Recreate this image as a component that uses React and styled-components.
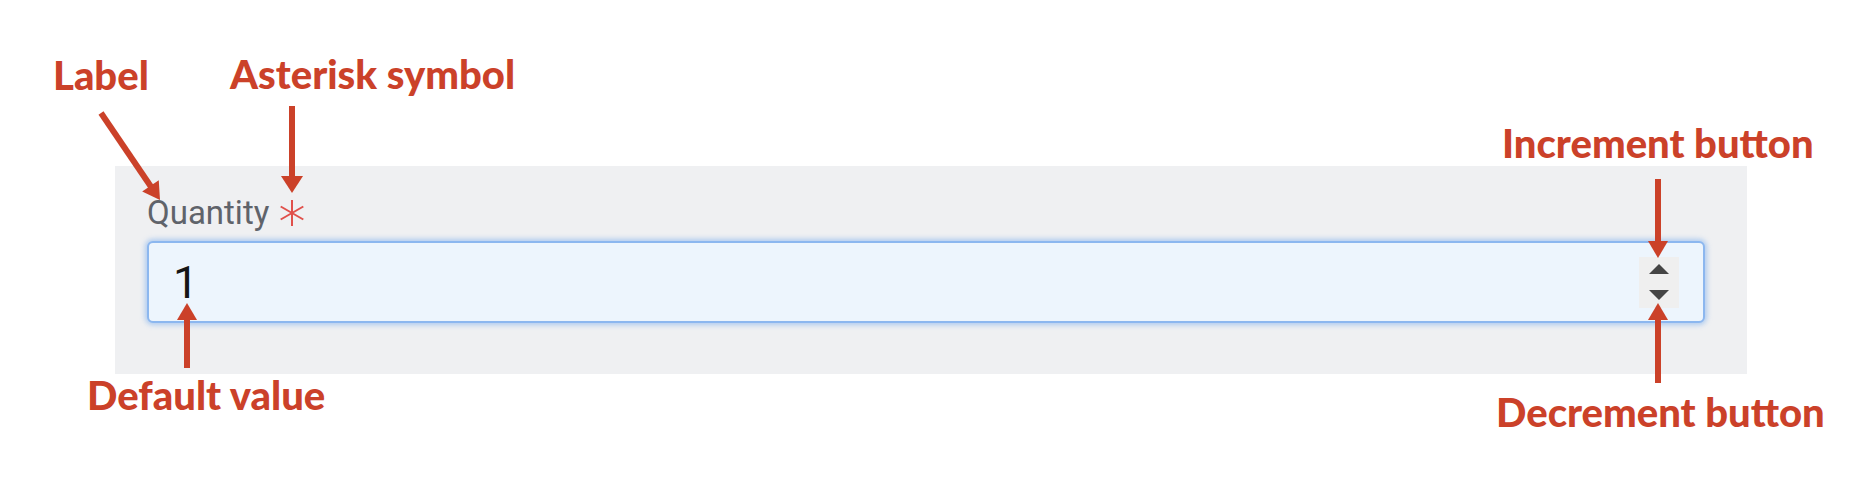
import React from 'react';
import styled, { createGlobalStyle } from 'styled-components';

const colors = {
  annotation: '#cb4129',
  panel: '#eff0f2',
  field: '#edf5fd',
  focus: '#8cb7ef',
  label: '#5f636a',
  required: '#e0504b',
  spin: '#efefef',
  spinGlyph: '#454545',
  value: '#151515',
};

const GlobalStyle = createGlobalStyle`
  html, body {
    margin: 0;
    padding: 0;
    background: #ffffff;
  }
  body {
    font-family: Roboto, "Noto Sans", sans-serif;
  }
`;

const Canvas = styled.div`
  position: relative;
  width: 1872px;
  height: 504px;
  box-sizing: border-box;
  padding: 166px 0 0 115px;
  overflow: hidden;
`;

const Panel = styled.div`
  display: flex;
  flex-direction: column;
  gap: 8px;
  width: 1632px;
  height: 208px;
  box-sizing: border-box;
  padding: 27px 42px 0 32px;
  background: ${colors.panel};
`;

const Label = styled.label`
  display: flex;
  align-items: center;
  gap: 10px;
  font-size: 33px;
  line-height: 40px;
  color: ${colors.label};
`;

const Field = styled.div`
  display: flex;
  align-items: center;
  justify-content: space-between;
  height: 82px;
  box-sizing: border-box;
  padding: 0 24px 0 24px;
  border: 2px solid ${colors.focus};
  border-radius: 6px;
  background: ${colors.field};
  box-shadow: 0 0 5px 2px rgba(132, 178, 238, 0.6);
`;

const Value = styled.span`
  font-size: 45px;
  line-height: 1;
  color: ${colors.value};
`;

const Spinner = styled.div`
  display: flex;
  flex-direction: column;
  width: 40px;
  height: 51px;
  background: ${colors.spin};
`;

const SpinButton = styled.button`
  flex: 1;
  display: flex;
  align-items: center;
  justify-content: center;
  padding: 0;
  border: none;
  background: transparent;
  cursor: pointer;

  &::before {
    content: '';
    width: 0;
    height: 0;
    border-left: 10px solid transparent;
    border-right: 10px solid transparent;
    ${(p) => (p.$down
      ? `border-top: 10px solid ${colors.spinGlyph};`
      : `border-bottom: 10px solid ${colors.spinGlyph};`)}
  }
`;

const Overlay = styled.svg`
  position: absolute;
  left: 0;
  top: 0;
  pointer-events: none;
`;

const Callout = styled.span`
  position: absolute;
  left: ${(p) => p.$x}px;
  top: ${(p) => p.$y}px;
  font-family: Lato, "Open Sans", sans-serif;
  font-weight: 900;
  font-size: 40px;
  line-height: 1;
  white-space: nowrap;
  color: ${colors.annotation};
`;

function RequiredMark() {
  return (
    <svg width="26" height="26" viewBox="0 0 26 26" aria-label="required">
      <g stroke={colors.required} strokeWidth="2" strokeLinecap="butt">
        <line x1="13" y1="0" x2="13" y2="26" />
        <line x1="1.7" y1="6.5" x2="24.3" y2="19.5" />
        <line x1="1.7" y1="19.5" x2="24.3" y2="6.5" />
      </g>
    </svg>
  );
}

function Arrow({ from, to, head = 17, width = 20 }) {
  const dx = to[0] - from[0];
  const dy = to[1] - from[1];
  const len = Math.hypot(dx, dy);
  const ux = dx / len;
  const uy = dy / len;
  const bx = to[0] - ux * head;
  const by = to[1] - uy * head;
  const nx = -uy * (width / 2);
  const ny = ux * (width / 2);
  return (
    <g fill={colors.annotation} stroke="none">
      <line x1={from[0]} y1={from[1]} x2={bx + ux} y2={by + uy} stroke={colors.annotation} strokeWidth="6" />
      <polygon points={`${to[0]},${to[1]} ${bx + nx},${by + ny} ${bx - nx},${by - ny}`} />
    </g>
  );
}

const arrows = [
  { from: [101, 113], to: [160, 200] },
  { from: [292, 106], to: [292, 193], width: 22 },
  { from: [187, 368], to: [187, 303] },
  { from: [1658, 179], to: [1658, 258] },
  { from: [1658, 383], to: [1658, 303] },
];

const callouts = [
  { text: 'Label', x: 53, y: 55 },
  { text: 'Asterisk symbol', x: 230, y: 54 },
  { text: 'Increment button', x: 1502, y: 123 },
  { text: 'Default value', x: 87, y: 375 },
  { text: 'Decrement button', x: 1496, y: 392 },
];

export default function App() {
  return (
    <>
      <GlobalStyle />
      <Canvas>
        <Panel>
          <Label>
            Quantity
            <RequiredMark />
          </Label>
          <Field>
            <Value>1</Value>
            <Spinner>
              <SpinButton aria-label="Increment" />
              <SpinButton aria-label="Decrement" $down />
            </Spinner>
          </Field>
        </Panel>
        <Overlay width="1872" height="504" viewBox="0 0 1872 504">
          {arrows.map((a, i) => (
            <Arrow key={i} {...a} />
          ))}
        </Overlay>
        {callouts.map((c) => (
          <Callout key={c.text} $x={c.x} $y={c.y}>{c.text}</Callout>
        ))}
      </Canvas>
    </>
  );
}
